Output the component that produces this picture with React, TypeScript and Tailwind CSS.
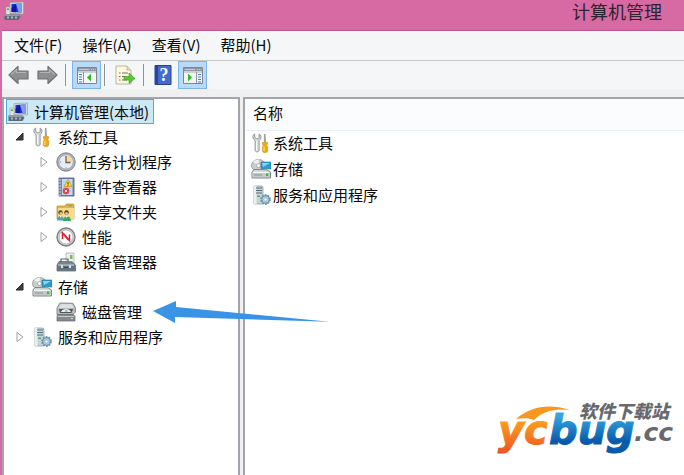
import React from "react";

type IconProps = { className?: string };

function ComputerIcon({ className = "size-5" }: IconProps) {
  return (
    <svg viewBox="0 0 20 20" className={className} aria-hidden="true">
      <path d="M6 1.5 19.5 1v12L6 12.5z" fill="#d9dcd2" stroke="#9a9f9c" strokeWidth=".7" />
      <path d="M7.5 3 17.5 2.5v9L7.5 11z" fill="#1a2fd0" />
      <path d="M12 2.8 17.5 2.5v9l-3-.2z" fill="#7f9df0" />
      <path d="M7.5 7 12 3v8.2L7.5 11z" fill="#0d18a8" />
      <path d="M2 6h4v8H2z" fill="#dfe3e6" stroke="#98a0a6" strokeWidth=".6" />
      <path d="M3 7.5h2v1.5H3z" fill="#48a050" />
      <path d="M.5 13.5h14l2 2-2 3.5H.5z" fill="#5b6b75" />
      <path d="M.5 13.5h14l1 1.5H.5z" fill="#8e9da6" />
      <path d="M3 15.5h2v2H3zM7 15.5h2v2H7zM11 15.5h2v2h-2z" fill="#aab6bb" />
    </svg>
  );
}

function ToolsIcon({ className = "size-5" }: IconProps) {
  return (
    <svg viewBox="0 0 20 20" className={className} aria-hidden="true">
      <path
        d="M3.500 1C1.600 2 1.500 4.500 2.500 6l1.600 1.500V17c0 2.500 4 2.500 4 0V7.500L9.500 6c1-2 .5-4-1.300-5v4L6 6 4 5z"
        fill="#dfe1e1"
        stroke="#868b8c"
        strokeWidth=".9"
      />
      <path d="M5.500 8v9" stroke="#f8f8f8" strokeWidth="1" />
      <path d="M13 1h1.500l.5 8h-2.200z" fill="#9aa0a3" />
      <path d="M11.500 9.500h5v2l-.8.800.9 1.700v4c0 2-5.200 2-5.200 0v-4l.9-1.700-.8-.8z" fill="#f2a90b" stroke="#b8830f" strokeWidth=".5" />
      <path d="M13 13.500v4.500" stroke="#ffe36f" strokeWidth="1.200" />
    </svg>
  );
}

function ClockIcon() {
  return (
    <svg viewBox="0 0 20 20" className="size-5" aria-hidden="true">
      <circle cx="10" cy="10" r="9.200" fill="#b4b6b8" stroke="#7c7f82" strokeWidth="1" />
      <circle cx="10" cy="10" r="7.200" fill="#e2edf6" stroke="#929ba4" strokeWidth=".7" />
      <path d="M10 10V3a7 7 0 0 1 7 7z" fill="#fbd8a0" />
      <path d="M10 4v6.500h4.500" fill="none" stroke="#706250" strokeWidth="1.300" />
      <path d="M10 15.500v1M4 10h1" stroke="#76808a" />
    </svg>
  );
}

function EventIcon() {
  return (
    <svg viewBox="0 0 20 20" className="size-5" aria-hidden="true">
      <path d="M3 1h15v18H3z" fill="#7189b0" stroke="#465c82" strokeWidth=".8" />
      <path d="M6 2h10.500v16H6z" fill="#c9d8ea" />
      <path d="M7 5h8M7 8h8M7 11h8M7 14h8" stroke="#a9bbd3" strokeWidth=".8" />
      <path d="M2 3h3M2 6h3M2 9h3M2 12h3M2 15h3M2 18h3" stroke="#d0d4db" strokeWidth="1.200" />
      <path d="m12 2.500 4 7H8z" fill="#ffd929" stroke="#ad8b12" strokeWidth=".6" />
      <path d="M12 5v2.500M12 8.200v.8" stroke="#4a3a00" strokeWidth="1" />
      <circle cx="10" cy="14" r="3.300" fill="#d9434d" />
      <path d="m8.800 12.800 2.400 2.400m0-2.400-2.400 2.400" stroke="#fff" strokeWidth=".9" />
    </svg>
  );
}

function SharedFolderIcon() {
  return (
    <svg viewBox="0 0 20 20" className="size-5" aria-hidden="true">
      <path d="M1 4h8l1.500-2h7L18 4v13H1z" fill="#dfb44b" stroke="#b58c31" strokeWidth=".7" />
      <path d="M2 6h16v11H2z" fill="#f8dc87" />
      <path d="M12 3h4v1.300h-4z" fill="#5ea9d6" />
      <circle cx="4.500" cy="10.500" r="2.200" fill="#67482c" />
      <circle cx="5" cy="11.500" r="1.400" fill="#e9bc91" />
      <path d="M1 18.500c0-6 7-6 7 0z" fill="#4aa4a8" />
      <circle cx="10.500" cy="10.500" r="2.200" fill="#50391f" />
      <circle cx="10.500" cy="11.500" r="1.400" fill="#e9bc91" />
      <path d="M7 19c0-6.500 8-6.500 8 0z" fill="#3ba56a" />
      <path d="m3.700 14 1 2 1-2M9.500 14l1.200 2 1.200-2" fill="#fff" />
    </svg>
  );
}

function PerformanceIcon() {
  return (
    <svg viewBox="0 0 20 20" className="size-5" aria-hidden="true">
      <circle cx="10" cy="10" r="9" fill="#d4d6d7" stroke="#7b7f82" strokeWidth="1.400" />
      <circle cx="10" cy="10" r="7" fill="#fff" stroke="#a5a7a8" strokeWidth=".8" />
      <path d="M6.500 12V6l7 7.500V7.500" fill="none" stroke="#d91f29" strokeWidth="1.500" />
      <path d="M5 5.500 8 6l6 7.500-2.500-.5z" fill="#e62834" />
    </svg>
  );
}

function DeviceIcon() {
  return (
    <svg viewBox="0 0 20 20" className="size-5" aria-hidden="true">
      <path d="M10 1h8v12h-8z" fill="#edf0ee" stroke="#a1a8a8" strokeWidth=".7" />
      <path d="M14 3h2.500v4H14z" fill="#77b663" />
      <path d="M5 10V7h7v3" fill="none" stroke="#59656b" strokeWidth="1.200" />
      <path d="m3 9.500 13 .2 3.500 3.300v6H1v-6z" fill="#76858e" stroke="#4e5b64" strokeWidth=".7" />
      <path d="M2 13h16" stroke="#c1cbd1" />
      <path d="M1 14h18v4H1z" fill="#657580" />
      <path d="M5 13h2v3H5zM13 13h2v3h-2z" fill="#d8dde0" />
      <path d="M8 15h4v1H8z" fill="#374752" />
    </svg>
  );
}

function StorageIcon() {
  return (
    <svg viewBox="0 0 20 20" className="size-5" aria-hidden="true">
      <ellipse cx="7.500" cy="6.500" rx="7" ry="6" fill="#c8cccd" stroke="#8e9496" strokeWidth=".8" />
      <path d="M7.500 6.500 2 3a7 6 0 0 1 6-2.500z" fill="#eff1f1" />
      <circle cx="7.500" cy="6.500" r="2" fill="#f8f8f8" stroke="#949a9c" strokeWidth=".7" />
      <path d="M10 3h10v7l-10-.5z" fill="#2a9cca" stroke="#257192" strokeWidth=".6" />
      <path d="M11 4h8l-7 4z" fill="#8bd4ed" />
      <path d="m3 10.500 13 .3 3.500 2.200v6H1v-6z" fill="#d8dbdc" stroke="#727a7d" strokeWidth=".9" />
      <path d="M1.500 13.500h17.500V18H1.500z" fill="#c3c8ca" />
      <path d="M2 13.500h16" stroke="#f4f5f5" strokeWidth="1" />
      <path d="M15 14.500h2.200v2.500H15z" fill="#32c31c" />
      <path d="M3 16h8" stroke="#8d9699" />
    </svg>
  );
}

function DiskIcon() {
  return (
    <svg viewBox="0 0 20 20" className="size-5" aria-hidden="true">
      <path d="m4 1 13 .3L19.500 6v4l-3 3H1V6z" fill="#b8bbbc" stroke="#777c7e" strokeWidth=".8" />
      <path d="m5 2 11 .3L18 6H2z" fill="#dee0df" />
      <path d="M3 7h14l-1.500 4H4z" fill="#505659" />
      <path d="M5 10c1-4 9-4 10 0z" fill="#eceded" />
      <path d="M9 9h2.500" stroke="#43a9a3" />
      <path d="M2 12.500h15.500l1.500 2V19H1v-4.500z" fill="#858a8d" stroke="#64696c" strokeWidth=".7" />
      <path d="M2 14.500h16" stroke="#d8dbdb" strokeWidth=".8" />
      <path d="M15 16.500h2" stroke="#d7dddb" />
    </svg>
  );
}

function ServicesIcon() {
  return (
    <svg viewBox="0 0 20 20" className="size-5" aria-hidden="true">
      <path d="M3 1h8l1 1v17H3z" fill="#c7d3da" stroke="#8a9aa5" strokeWidth=".7" />
      <path d="M3 1h2.500v18H3z" fill="#e9f0f3" />
      <path d="M5 3h6M5 5.500h6M5 8h6" stroke="#536d7b" strokeWidth="1" />
      <path d="M6 10.500h3V12H6z" fill="#56ac68" />
      <circle cx="14.500" cy="14.500" r="4.500" fill="#8fb4d1" stroke="#7295b1" strokeWidth="1.800" strokeDasharray="1.800 1.030" />
      <circle cx="14.500" cy="14.500" r="3.600" fill="#b4d0e4" stroke="#648eaf" strokeWidth=".7" />
      <circle cx="14.500" cy="14.500" r="1.600" fill="#fff" stroke="#7d9caf" strokeWidth=".6" />
    </svg>
  );
}

function Arrow({ back }: { back?: boolean }) {
  return (
    <svg viewBox="0 0 21 20" className="h-5 w-[21px]" aria-hidden="true">
      <path
        d={back ? "M1 10 10 1.500V6h10v8H10v4.500z" : "M20 10 11 1.500V6H1v8h10v4.500z"}
        fill="#8f8f8f"
        stroke="#707070"
        strokeWidth="1.200"
        strokeLinejoin="round"
      />
      <path d={back ? "m3 9.500 5.500-5V7.500H18" : "m18 9.500-5.500-5V7.500H3"} fill="none" stroke="#b4b4b4" strokeWidth="1.200" />
    </svg>
  );
}

function PaneIcon({ right }: { right?: boolean }) {
  const list = right ? 15 : 2;
  return (
    <svg viewBox="0 0 20 18" className="h-[18px] w-5" aria-hidden="true">
      <path d="M.5 1.500h19v16H.5z" fill="#f4f6f8" stroke="#7e8791" />
      <path d="M1 2h18v3H1z" fill="#8f98a3" />
      <path d="M2 3.500h10M14 3.500h1M16 3.500h1M18 3.500h.7" stroke="#c9ced5" />
      <path d="M1 6h18" stroke="#a4abb3" />
      <path d={right ? "M13.500 6v11" : "M6.500 6v11"} stroke="#8b949f" />
      <path d={`M${list} 8.500h3M${list} 11h3M${list} 13.500h3M${list} 16h3`} stroke="#477fc0" />
      <path d={right ? "m5 7.500 4 4-4 4z" : "m14 7.500-4 4 4 4z"} fill="#35b52a" />
    </svg>
  );
}

function ExportIcon() {
  return (
    <svg viewBox="0 0 20 20" className="size-5" aria-hidden="true">
      <path d="M1 1h11l4 4v14H1z" fill="#fdf9df" stroke="#aaa68d" strokeWidth=".8" />
      <path d="M12 1v4h4" fill="#e6dfba" stroke="#aaa68d" strokeWidth=".7" />
      <path d="M4 8h1.500M4 11.500h1.500M4 15h1.500M7 8h6M7 11.500h3M7 15h5" stroke="#73736a" />
      <path d="M9 11.500h5V8l6 5.500-6 5V15H9z" fill="#55c832" stroke="#3c9a29" strokeWidth=".6" />
    </svg>
  );
}

function HelpIcon() {
  return (
    <svg viewBox="0 0 18 20" className="h-5 w-[18px]" aria-hidden="true">
      <path d="M1 .5h16v19H1z" fill="#4569ca" stroke="#24428f" />
      <path d="M1 1h3v18H1z" fill="#2445a4" />
      <text x="10" y="16" textAnchor="middle" fill="#fff" fontSize="18" fontWeight="700" fontFamily="Liberation Serif, serif">?</text>
    </svg>
  );
}

type Node = {
  label: string;
  icon: () => React.JSX.Element;
  level: 1 | 2;
  state?: "open" | "closed";
};

const nodes: Node[] = [
  { label: "系统工具", icon: ToolsIcon, level: 1, state: "open" },
  { label: "任务计划程序", icon: ClockIcon, level: 2, state: "closed" },
  { label: "事件查看器", icon: EventIcon, level: 2, state: "closed" },
  { label: "共享文件夹", icon: SharedFolderIcon, level: 2, state: "closed" },
  { label: "性能", icon: PerformanceIcon, level: 2, state: "closed" },
  { label: "设备管理器", icon: DeviceIcon, level: 2 },
  { label: "存储", icon: StorageIcon, level: 1, state: "open" },
  { label: "磁盘管理", icon: DiskIcon, level: 2 },
  { label: "服务和应用程序", icon: ServicesIcon, level: 1, state: "closed" },
];

const entries = [
  { label: "系统工具", icon: ToolsIcon },
  { label: "存储", icon: StorageIcon },
  { label: "服务和应用程序", icon: ServicesIcon },
];

function Expander({ state }: { state?: "open" | "closed" }) {
  if (!state) return <span className="w-3" />;
  return (
    <button type="button" aria-label={state === "open" ? "折叠" : "展开"} className="w-3">
      <svg viewBox="0 0 12 12" className="size-3" aria-hidden="true">
        {state === "open" ? (
          <path d="M9 2v7H2z" fill="#404040" stroke="#262626" />
        ) : (
          <path d="M3 1.500v9L9 6z" fill="#fff" stroke="#a0a0a0" />
        )}
      </svg>
    </button>
  );
}

function Logo() {
  return (
    <svg viewBox="0 0 184 68" className="absolute right-1 bottom-3 h-[68px] w-[184px]" role="img" aria-label="ycbug.cc 软件下载站">
      <defs>
        <linearGradient id="orange" x1="0" y1="0" x2="0" y2="1">
          <stop offset="0.3" stopColor="#fba01c" />
          <stop offset="1" stopColor="#ee5324" />
        </linearGradient>
        <linearGradient id="blue" x1="0" y1="0" x2="0" y2="1">
          <stop offset="0.2" stopColor="#35a5df" />
          <stop offset="0.75" stopColor="#075aac" />
        </linearGradient>
      </defs>
      <path d="M20 24C34 12 52 8 74 15 58 13 46 17 38 25c-5-2-11-2-18-1z" fill="#f89720" />
      <g fontFamily="DejaVu Sans, sans-serif" fontWeight="700" fontStyle="italic">
        <text x="2" y="49" fontSize="40" fill="url(#orange)" stroke="url(#orange)">yc</text>
        <text x="53" y="49" fontSize="40" fill="url(#blue)" stroke="url(#blue)">bug</text>
        <text x="138" y="46" fontSize="25" fill="#68696c">.cc</text>
      </g>
      <text x="83" y="23" fontSize="18" fontWeight="900" fontStyle="italic" fill="#68696c" fontFamily="Noto Sans CJK SC, sans-serif">软件下载站</text>
    </svg>
  );
}

export default function App() {
  return (
    <div className="relative flex min-h-screen flex-col overflow-hidden bg-[#d86aa3] pl-0.5 font-['Noto_Sans_CJK_SC',sans-serif] text-[15px] leading-5 text-[#080808]">
      <header className="flex h-[31px] shrink-0 items-start justify-between border-b border-[#b5578a] pr-[22px] pl-0.5">
        <ComputerIcon className="mt-px size-5" />
        <h1 className="text-lg leading-[22px] text-[#2c2430]">计算机管理</h1>
      </header>

      <nav className="flex h-[30px] shrink-0 items-center gap-5 border-b border-[#c6c8ca] bg-[#f5f6f8] px-3 pb-0.5">
        <button type="button">文件(F)</button>
        <button type="button">操作(A)</button>
        <button type="button">查看(V)</button>
        <button type="button">帮助(H)</button>
      </nav>

      <div className="flex h-7 shrink-0 items-center bg-[#f5f6f8] pl-1.5">
        <button type="button" aria-label="后退"><Arrow back /></button>
        <button type="button" aria-label="前进" className="ml-2"><Arrow /></button>
        <span className="ml-[7px] h-[22px] w-px bg-[#929292]" />
        <button type="button" aria-label="显示/隐藏控制台树" className="ml-1.5 flex h-7 w-[29px] items-center justify-center border border-[#7db4ea] bg-[#b9d9f8]">
          <PaneIcon />
        </button>
        <span className="ml-[3px] h-[22px] w-px bg-[#929292]" />
        <button type="button" aria-label="导出列表" className="ml-2.5"><ExportIcon /></button>
        <span className="ml-2 h-[22px] w-px bg-[#929292]" />
        <button type="button" aria-label="帮助" className="ml-2.5"><HelpIcon /></button>
        <button type="button" aria-label="显示/隐藏操作窗格" className="ml-1.5 flex h-7 w-[29px] items-center justify-center border border-[#7db4ea] bg-[#b9d9f8]">
          <PaneIcon right />
        </button>
      </div>

      <main className="flex grow gap-[3px] bg-[#f0f0f0] pt-2">
        <aside className="w-[238px] shrink-0 border-t-2 border-r-2 border-l-2 border-[#a2a5ac] bg-white px-0.5">
          <button type="button" className="flex h-[25px] items-center gap-1.5 border border-[#48aee0] bg-[#cbe8f7] pr-1 pl-px">
            <ComputerIcon />
            计算机管理(本地)
          </button>
          <ul>
            {nodes.map(({ label, icon: Icon, level, state }) => (
              <li key={label} className={`flex h-[25px] items-center ${level === 1 ? "pl-2" : "pl-8"}`}>
                <Expander state={state} />
                <button type="button" className="ml-1.5 flex items-center gap-1.5">
                  <Icon />
                  {label}
                </button>
              </li>
            ))}
          </ul>
        </aside>

        <section className="grow border-t-2 border-l-2 border-[#a2a5ac] bg-white">
          <table className="w-full border-collapse">
            <thead>
              <tr className="h-[31px] border-b border-[#e8eff7] bg-[#fbfcfe]">
                <th scope="col" className="pb-0.5 pl-2 text-left font-normal">名称</th>
              </tr>
            </thead>
            <tbody>
              {entries.map(({ label, icon: Icon }) => (
                <tr key={label} className="h-[26px]">
                  <td className="pl-1.5">
                    <span className="flex items-center gap-0.5">
                      <Icon />
                      {label}
                    </span>
                  </td>
                </tr>
              ))}
            </tbody>
          </table>
        </section>
      </main>

      <svg viewBox="0 0 178 24" className="absolute top-[300px] left-[152px] h-6 w-[178px]" aria-hidden="true">
        <path d="M1 11 24 1v6l153.500 14.700L23 17v6z" fill="#3994e6" />
      </svg>
      <Logo />
    </div>
  );
}
